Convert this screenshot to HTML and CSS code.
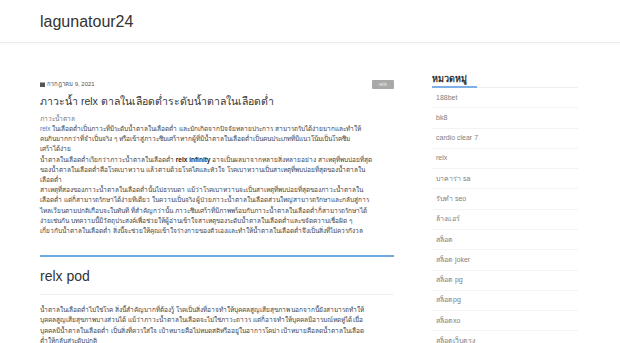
FILE: index.html
```html
<!DOCTYPE html>
<html lang="th">
<head>
<meta charset="utf-8">
<title>lagunatour24</title>
<link rel="stylesheet" href="styles.css">
</head>
<body>
<header class="site-header">
  <a class="brand" href="#">lagunatour24</a>
</header>
<div class="page">
  <main class="main">
    <article class="post">
      <div class="post-meta">
        <span class="date">
          <svg class="cal" width="5" height="5" viewBox="0 0 5 5"><rect x="0" y="0.5" width="5" height="4.5" fill="#555"/></svg>
          กรกฎาคม 9, 2021
        </span>
        <span class="badge">relx</span>
      </div>
      <h1 class="post-title">ภาวะน้ำ relx ตาลในเลือดต่ำระดับน้ำตาลในเลือดต่ำ</h1>
      <p class="lead">ภาวะน้ำตาล</p>
      <p class="body-text"><a href="#">relx</a> ในเลือดต่ำเป็นภาวะที่มีระดับน้ำตาลในเลือดต่ำ และมักเกิดจากปัจจัยหลายประการ สามารถรับได้ง่ายมากและทำให้<br>คนกินมากกว่าที่จำเป็นจริง ๆ หรือเข้าสู่ภาวะซึมเศร้าหากผู้ที่มีน้ำตาลในเลือดต่ำเป็นคนประเภทที่มีแนวโน้มเป็นโรคซึม<br>เศร้าได้ง่าย<br>น้ำตาลในเลือดต่ำเรียกว่าภาวะน้ำตาลในเลือดต่ำ <b>relx infinity</b> อาจเป็นผลมาจากหลายสิ่งหลายอย่าง สาเหตุที่พบบ่อยที่สุด<br>ของน้ำตาลในเลือดต่ำคือโรคเบาหวาน แล้วตามด้วยโรคไตและหัวใจ โรคเบาหวานเป็นสาเหตุที่พบบ่อยที่สุดของน้ำตาลใน<br>เลือดต่ำ<br>สาเหตุที่สองของภาวะน้ำตาลในเลือดต่ำนั้นไม่ธรรมดา แม้ว่าโรคเบาหวานจะเป็นสาเหตุที่พบบ่อยที่สุดของภาวะน้ำตาลใน<br>เลือดต่ำ แต่ก็สามารถรักษาได้ง่ายทีเดียว ในความเป็นจริง ผู้ป่วยภาวะน้ำตาลในเลือดส่วนใหญ่สามารถรักษาและกลับสู่การ<br>ไหลเวียนตามปกติเกือบจะในทันที ที่สำคัญกว่านั้น ภาวะซึมเศร้าที่มีภาพพร้อมกับภาวะน้ำตาลในเลือดต่ำก็สามารถรักษาได้<br>ง่ายเช่นกัน บทความนี้มีวัตถุประสงค์เพื่อช่วยให้ผู้อ่านเข้าใจสาเหตุของระดับน้ำตาลในเลือดต่ำและขจัดความเชื่อผิด ๆ<br>เกี่ยวกับน้ำตาลในเลือดต่ำ สิ่งนี้จะช่วยให้คุณเข้าใจร่างกายของตัวเองและทำให้น้ำตาลในเลือดต่ำจึงเป็นสิ่งที่ไม่ควรกังวล</p>
    </article>
    <section class="post second">
      <h2 class="section-title">relx pod</h2>
      <p class="body-text">น้ำตาลในเลือดต่ำไม่ใช่โรค สิ่งนี้สำคัญมากที่ต้องรู้ โรคเป็นสิ่งที่อาจทำให้บุคคลสูญเสียสุขภาพ นอกจากนี้ยังสามารถทำให้<br>บุคคลสูญเสียสุขภาพบางส่วนได้ แม้ว่าภาวะน้ำตาลในเลือดจะไม่ใช่ภาวะถาวร แต่ก็อาจทำให้บุคคลมีอารมณ์หดหู่ได้ เมื่อ<br>บุคคลมีน้ำตาลในเลือดต่ำ เป็นสิ่งที่ควรใส่ใจ เป้าหมายคือไม่หมดสติหรืออยู่ในอาการโคม่า เป้าหมายคือลดน้ำตาลในเลือด<br>ต่ำให้กลับสู่ระดับปกติ</p>
    </section>
  </main>
  <aside class="sidebar">
    <h3 class="widget-title"><span>หมวดหมู่</span></h3>
    <ul class="cat-list">
      <li><a href="#">188bet</a></li>
      <li><a href="#">bk8</a></li>
      <li><a href="#">cardio clear 7</a></li>
      <li><a href="#">relx</a></li>
      <li><a href="#">บาคาร่า sa</a></li>
      <li><a href="#">รับทำ seo</a></li>
      <li><a href="#">ล้างแอร์</a></li>
      <li><a href="#">สล็อต</a></li>
      <li><a href="#">สล็อต joker</a></li>
      <li><a href="#">สล็อต pg</a></li>
      <li><a href="#">สล็อตpg</a></li>
      <li><a href="#">สล็อตxo</a></li>
      <li><a href="#">สล็อตเว็บตรง</a></li>
    </ul>
  </aside>
</div>
</body>
</html>
```

FILE: styles.css
```css
* { box-sizing: border-box; }
html, body { margin: 0; padding: 0; background: #fff; }
body {
  font-family: "Liberation Sans", Arial, "Noto Sans", sans-serif;
  color: #333;
}
a { text-decoration: none; }

.site-header {
  height: 43px;
  border-bottom: 1px solid #ececec;
  box-shadow: 0 1px 2px rgba(0,0,0,0.04);
  display: flex;
  align-items: center;
  padding-left: 40px;
}
.brand {
  font-size: 16px;
  color: #333;
  line-height: 1;
  margin-top: 2px;
}

.page {
  display: flex;
  gap: 38px;
  padding: 26px 0 0 40px;
}
.main { width: 354px; flex: none; padding-top: 7px; }
.sidebar { width: 146px; flex: none; }

.post-meta {
  display: flex;
  justify-content: space-between;
  align-items: center;
  height: 10px;
  margin-top: 3px;
}
.date {
  font-size: 6px;
  color: #555;
  display: flex;
  align-items: center;
  gap: 2px;
}
.cal { display: block; }
.badge {
  background: #a9a9a9;
  color: #eee;
  font-size: 5px;
  padding: 2px 7px;
  border-radius: 1px;
  line-height: 5px;
}
.post-title {
  font-size: 10.5px;
  font-weight: normal;
  margin: 5px 0 0;
  line-height: 14px;
  color: #333;
}
.lead {
  font-size: 6.5px;
  color: #777;
  margin: 6px 0 0;
  line-height: 9px;
}
.body-text {
  font-size: 6.5px;
  line-height: 10.2px;
  color: #444;
  margin: 1px 0 0;
  white-space: nowrap;
}
.body-text a { color: #3b7dc4; }
.body-text b { color: #222; }

.second {
  margin-top: 19px;
  border-top: 2px solid #6fa8dc;
}
.section-title {
  font-size: 14px;
  font-weight: normal;
  margin: 0;
  padding: 11px 0 10px;
  line-height: 16px;
  border-bottom: 1px solid #f0f0f0;
  color: #333;
}
.second .body-text { margin-top: 10px; }

.widget-title {
  margin: 0;
  font-size: 9px;
  font-weight: bold;
  color: #333;
  border-bottom: 1px solid #eee;
  line-height: 12px;
  padding-top: 4px;
}
.widget-title span {
  display: inline-block;
  border-bottom: 2px solid #7eb0e6;
  padding-bottom: 1px;
  margin-bottom: -1px;
  width: 45px;
}
.cat-list {
  list-style: none;
  margin: 0;
  padding: 0;
}
.cat-list li {
  font-size: 7px;
  line-height: 10px;
  padding: 4.65px 0 4.65px 4px;
  border-bottom: 1px solid #f3f3f3;
}
.cat-list a { color: #808080; }
```
